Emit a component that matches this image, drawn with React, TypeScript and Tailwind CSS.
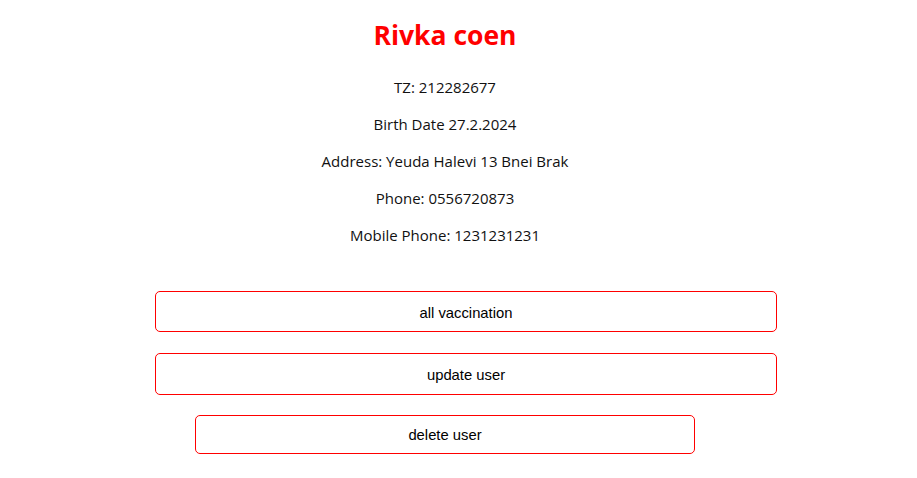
export default function App() {
  const lines = [
    "TZ: 212282677",
    "Birth Date 27.2.2024",
    "Address: Yeuda Halevi 13 Bnei Brak",
    "Phone: 0556720873",
    "Mobile Phone: 1231231231",
  ];

  return (
    <div className="w-[917px] h-[478px] bg-white overflow-hidden">
      <div className="w-[890px] flex flex-col items-center pt-[16px] font-['Open_Sans',sans-serif] text-[#111]">
        <h1 className="text-[26.5px] font-bold text-[#ff0000] leading-[38px]">Rivka coen</h1>
        <div className="flex flex-col items-center mt-[22px] gap-[15px]">
          {lines.map((l) => (
            <p key={l} className="text-[15px] leading-[22px]">
              {l}
            </p>
          ))}
        </div>
      </div>
      <div className="flex flex-col mt-[45px] font-['Liberation_Sans',Arial,sans-serif] text-[14.8px] text-black">
        <button className="ml-[155px] w-[622px] h-[41px] pt-[3px] border border-[#ff0000] rounded-[5px] bg-white">
          all vaccination
        </button>
        <button className="ml-[155px] mt-[21px] w-[622px] h-[42px] pt-[2px] border border-[#ff0000] rounded-[5px] bg-white">
          update user
        </button>
        <button className="ml-[195px] mt-[20px] w-[500px] h-[39px] pt-[2px] border border-[#ff0000] rounded-[5px] bg-white">
          delete user
        </button>
      </div>
    </div>
  );
}
